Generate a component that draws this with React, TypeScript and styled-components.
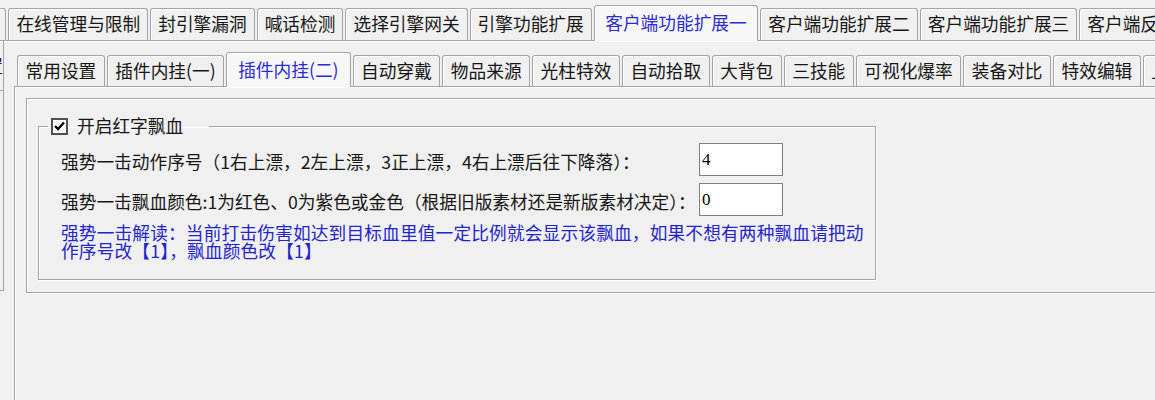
import React from "react";
import styled, { createGlobalStyle } from "styled-components";

const GlobalStyle = createGlobalStyle`
  html, body {
    margin: 0;
    padding: 0;
    background: #f0f0f0;
  }
  body {
    font-family: "Noto Sans CJK SC", "Noto Sans", sans-serif;
    font-size: 17.7px;
    color: #161616;
  }
`;

const Window = styled.div`
  width: 1155px;
  height: 400px;
  overflow: hidden;
  background: #f0f0f0;
  display: flex;
  flex-direction: column;
`;

const TabStrip = styled.div<{ $height: number; $shift: number }>`
  display: flex;
  align-items: flex-end;
  gap: 2px;
  flex: none;
  height: ${(p) => p.$height}px;
  margin-left: ${(p) => p.$shift}px;
  white-space: nowrap;
`;

const Tab = styled.div<{ $active?: boolean; $h: number; $pad: number }>`
  flex: none;
  position: relative;
  z-index: ${(p) => (p.$active ? 2 : 1)};
  box-sizing: border-box;
  height: ${(p) => (p.$active ? p.$h + 4 : p.$h)}px;
  margin-bottom: ${(p) => (p.$active ? -1 : 0)}px;
  padding: 0 ${(p) => (p.$active ? p.$pad + 3.5 : p.$pad)}px 1px;
  display: flex;
  align-items: center;
  border: 1px solid #a4a4a4;
  border-bottom: none;
  border-radius: 3px 3px 0 0;
  background: ${(p) => (p.$active ? "#f7f7f7" : "#f0f0f0")};
  box-shadow: inset 1px 1px 0 #fdfdfd;
  color: ${(p) => (p.$active ? "#2b2bd4" : "#161616")};
  line-height: 1;
`;

const OuterPage = styled.div`
  flex: 1;
  display: flex;
  border-top: 1px solid #a4a4a4;
  box-shadow: inset 0 1px 0 #fdfdfd;
  min-height: 0;
`;

const SideStub = styled.div`
  flex: none;
  width: 3px;
  height: 250px;
  overflow: hidden;
  border-right: 1px solid #a4a4a4;
  display: flex;
  flex-direction: column;
`;

const StubCell = styled.div<{ $h: number }>`
  flex: none;
  height: ${(p) => p.$h}px;
  border-bottom: 1px solid #a4a4a4;
  display: flex;
  justify-content: flex-end;
  align-items: center;
  line-height: 1;
`;

const StubGlyph = styled.span`
  flex: none;
`;

const InnerTabs = styled.div`
  flex: 1;
  margin-left: 10px;
  display: flex;
  flex-direction: column;
  min-width: 0;
`;

const InnerPage = styled.div`
  flex: 1;
  border-top: 1px solid #a4a4a4;
  border-left: 1px solid #a4a4a4;
  box-shadow: inset 1px 1px 0 #fdfdfd;
  padding: 11px 0 0 11px;
`;

const SubPanel = styled.div`
  box-sizing: border-box;
  height: 195px;
  margin-right: -20px;
  border: 1px solid #a4a4a4;
  box-shadow: inset 1px 1px 0 #fdfdfd, 1px 1px 0 #fdfdfd;
  padding: 17px 11px 0;
`;

const Group = styled.fieldset`
  box-sizing: border-box;
  width: 838px;
  min-width: 0;
  margin: 0;
  padding: 0 4px 20px 22px;
  border: 1px solid #a4a4a4;
  box-shadow: inset 1px 1px 0 #fdfdfd, 1px 1px 0 #fdfdfd;
`;

const Legend = styled.legend`
  margin-left: -13px;
  padding: 0 26px 0 3px;
  height: 20px;
  display: flex;
  align-items: center;
  gap: 9px;
  line-height: 1;
`;

const CheckBox = styled.span`
  box-sizing: border-box;
  width: 17px;
  height: 17px;
  border: 2px solid #505050;
  background: #fff;
  display: flex;
  align-items: center;
  justify-content: center;
`;

const FieldGrid = styled.div`
  margin-top: 7px;
  display: grid;
  grid-template-columns: 638px 84px;
  row-gap: 7px;
  align-items: center;
`;

const Label = styled.span`
  white-space: nowrap;
  line-height: 1;
  padding-top: 4px;
`;

const NumberBox = styled.div`
  box-sizing: border-box;
  height: 33px;
  border: 1px solid #7f7f7f;
  background: #fff;
  padding-left: 2px;
  display: flex;
  align-items: center;
  font-family: "Liberation Serif", "DejaVu Serif", serif;
  font-size: 17px;
  color: #000;
`;

const Note = styled.div`
  margin-top: 7px;
  color: #2424cc;
  line-height: 18px;
  letter-spacing: 0.15px;
  white-space: nowrap;
`;

const outerTabs = [
  "全部",
  "在线管理与限制",
  "封引擎漏洞",
  "喊话检测",
  "选择引擎网关",
  "引擎功能扩展",
  "客户端功能扩展一",
  "客户端功能扩展二",
  "客户端功能扩展三",
  "客户端反外挂",
];

const innerTabs = [
  "常用设置",
  "插件内挂(一)",
  "插件内挂(二)",
  "自动穿戴",
  "物品来源",
  "光柱特效",
  "自动拾取",
  "大背包",
  "三技能",
  "可视化爆率",
  "装备对比",
  "特效编辑",
  "上线提示",
];

const Check = () => (
  <svg width="11" height="10" viewBox="0 0 11 10">
    <path d="M1 5 L4 8 L10 1.5" fill="none" stroke="#000" strokeWidth="2.4" />
  </svg>
);

export default function App() {
  return (
    <Window>
      <GlobalStyle />
      <TabStrip $height={40} $shift={-45}>
        {outerTabs.map((t) => (
          <Tab key={t} $h={32} $pad={7} $active={t === "客户端功能扩展一"}>
            {t}
          </Tab>
        ))}
      </TabStrip>
      <OuterPage>
        <SideStub>
          <StubCell $h={49}>
            <StubGlyph>置</StubGlyph>
          </StubCell>
          <StubCell $h={199} />
        </SideStub>
        <InnerTabs>
          <TabStrip $height={45} $shift={3}>
            {innerTabs.map((t) => (
              <Tab key={t} $h={31} $pad={7.5} $active={t === "插件内挂(二)"}>
                {t}
              </Tab>
            ))}
          </TabStrip>
          <InnerPage>
            <SubPanel>
              <Group>
                <Legend>
                  <CheckBox>
                    <Check />
                  </CheckBox>
                  开启红字飘血
                </Legend>
                <FieldGrid>
                  <Label>强势一击动作序号（1右上漂，2左上漂，3正上漂，4右上漂后往下降落）：</Label>
                  <NumberBox>4</NumberBox>
                  <Label>强势一击飘血颜色:1为红色、0为紫色或金色（根据旧版素材还是新版素材决定）：</Label>
                  <NumberBox>0</NumberBox>
                </FieldGrid>
                <Note>
                  强势一击解读：当前打击伤害如达到目标血里值一定比例就会显示该飘血，如果不想有两种飘血请把动
                  <br />
                  作序号改【1】，飘血颜色改【1】
                </Note>
              </Group>
            </SubPanel>
          </InnerPage>
        </InnerTabs>
      </OuterPage>
    </Window>
  );
}
